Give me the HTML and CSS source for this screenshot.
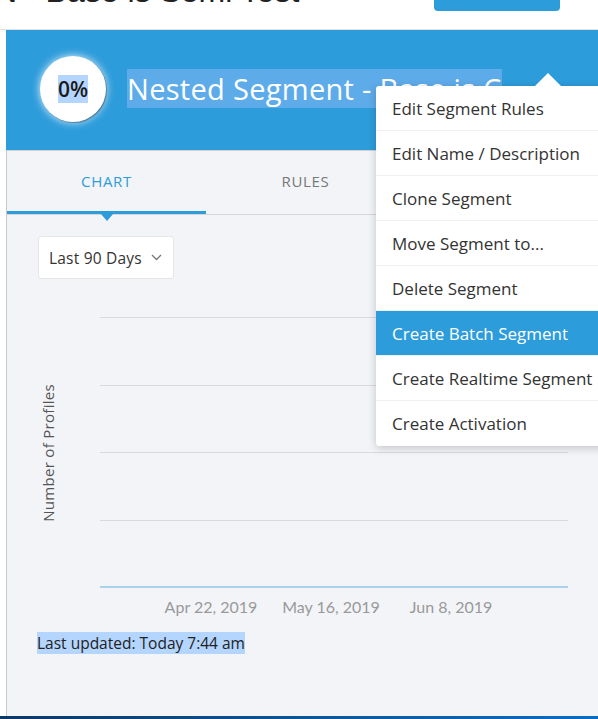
FILE: index.html
```html
<!DOCTYPE html>
<html lang="en">
<head>
<meta charset="utf-8">
<title>Segment</title>
<link rel="stylesheet" href="styles.css">
</head>
<body>
<div class="page">
  <div class="topbar">
    <h1 class="page-title">N - Base is Semi Test</h1>
    <span class="top-btn"></span>
  </div>
  <div class="panel">
    <div class="hero">
      <div class="progress"><span class="sel-light">0%</span></div>
      <h2 class="seg-title"><span class="sel-dark">Nested Segment - Base is C</span></h2>
    </div>
    <div class="tabs">
      <div class="tab active">CHART</div>
      <div class="tab">RULES</div>
      <div class="tab">ACTIVATIONS</div>
    </div>
    <div class="content">
      <div class="range">
        <span>Last 90 Days</span>
        <svg class="chev" width="11" height="7" viewBox="0 0 11 7"><path d="M1 1l4.5 4.5L10 1" fill="none" stroke="#777" stroke-width="1.3"/></svg>
      </div>
      <div class="chart">
        <div class="ylabel">Number of Profiles</div>
        <div class="plot">
          <div class="gridrow r1"></div>
          <div class="gridrow r2"></div>
          <div class="gridrow r3"></div>
          <div class="gridrow r4"></div>
        </div>
        <div class="xlabels">
          <span>Apr 22, 2019</span>
          <span>May 16, 2019</span>
          <span>Jun 8, 2019</span>
        </div>
      </div>
      <div class="updated"><span class="sel-light">Last updated: Today 7:44 am</span></div>
    </div>
  </div>
  <div class="taskbar"></div>
  <ul class="menu">
    <li>Edit Segment Rules</li>
    <li>Edit Name / Description</li>
    <li>Clone Segment</li>
    <li>Move Segment to...</li>
    <li>Delete Segment</li>
    <li class="hl">Create Batch Segment</li>
    <li>Create Realtime Segment</li>
    <li>Create Activation</li>
  </ul>
</div>
</body>
</html>
```
FILE: styles.css
```css
* { box-sizing: border-box; }
html, body { margin: 0; padding: 0; }
body {
  overflow: hidden;
  background: #fff;
  font-family: "Open Sans", "Noto Sans", sans-serif;
  color: #333;
}
.page {
  position: relative;
  width: 598px;
  height: 719px;
  display: flex;
  flex-direction: column;
}
.topbar {
  height: 30px;
  flex-shrink: 0;
  border-bottom: 1px solid #e2e2e2;
  display: flex;
  justify-content: space-between;
  align-items: flex-start;
  overflow: hidden;
}
.page-title {
  margin: -27px 0 0 -6px;
  font-family: "Liberation Sans", Arial, sans-serif;
  font-weight: 400;
  font-size: 32px;
  line-height: 36px;
  color: #222;
  white-space: nowrap;
}
.top-btn {
  display: block;
  width: 126px;
  height: 31px;
  margin: -20px 38px 0 0;
  background: #2d9cdb;
  border-radius: 4px;
}
.panel {
  flex: 1;
  margin-left: 6px;
  border-left: 1px solid #c9c9c9;
  background: #f3f4f8;
  display: flex;
  flex-direction: column;
  min-width: 0;
}
.hero {
  height: 120px;
  margin-left: -1px;
  background: #2d9cdb;
  display: flex;
  align-items: center;
  padding-left: 34px;
  gap: 21px;
}
.progress {
  width: 66px;
  height: 66px;
  border-radius: 50%;
  background: #fff;
  flex-shrink: 0;
  display: flex;
  align-items: center;
  justify-content: center;
  box-shadow: 1px 1px 1px rgba(0,0,0,0.35), 0 0 9px rgba(255,255,255,0.9);
  font-size: 21px;
  font-weight: 600;
  color: #1a1a1a;
  margin-top: -2px;
}
.sel-light { background: #b4d5fe; }
.sel-dark { background: #5eabea; }
.seg-title {
  margin: -2px 0 0 0;
  font-weight: 400;
  font-size: 29px;
  letter-spacing: 0.3px;
  line-height: 40px;
  color: #fff;
  white-space: nowrap;
  overflow: hidden;
  max-width: 376px;
}
.tabs {
  display: flex;
  height: 65px;
  border-top: 1px solid #cfcfcf;
  border-bottom: 1px solid #d6d6d6;
}
.tab {
  position: relative;
  width: 199px;
  flex-shrink: 0;
  display: flex;
  align-items: center;
  justify-content: center;
  font-size: 15px;
  letter-spacing: 0.7px;
  color: #777;
  padding-bottom: 3px;
}
.tab.active {
  color: #2d9cdb;
  border-bottom: 3px solid #2d9cdb;
  padding-bottom: 0;
}
.tab.active::after {
  content: "";
  position: absolute;
  left: 50%;
  bottom: -10px;
  margin-left: -6px;
  border-left: 6px solid transparent;
  border-right: 6px solid transparent;
  border-top: 7px solid #2d9cdb;
}
.content {
  padding: 21px 0 0 30px;
}
.range {
  margin-left: 1px;
  width: 136px;
  height: 43px;
  background: #fff;
  border: 1px solid #e6e6e6;
  border-radius: 3px;
  display: flex;
  align-items: center;
  justify-content: space-between;
  padding: 0 11px 0 10px;
  font-size: 15.5px;
  letter-spacing: 0.2px;
  color: #333;
}
.chev { display: block; }
.chart {
  display: grid;
  grid-template-columns: 63px 468px;
  margin-top: 38px;
}
.ylabel {
  grid-row: 1;
  grid-column: 1;
  writing-mode: vertical-rl;
  transform: rotate(180deg);
  align-self: center;
  justify-self: start;
  margin-left: 1px;
  font-size: 15px;
  letter-spacing: 0.3px;
  color: #555;
}
.plot {
  grid-row: 1;
  grid-column: 2;
  display: flex;
  flex-direction: column;
  border-bottom: 2px solid #a9d3ec;
}
.gridrow { border-top: 1px solid #dadada; }
.r1 { height: 68px; }
.r2 { height: 67px; }
.r3 { height: 68px; }
.r4 { height: 66px; }
.xlabels {
  grid-row: 2;
  grid-column: 2;
  display: grid;
  grid-template-columns: repeat(3, 120px);
  padding-left: 51px;
  margin-top: 9px;
  font-family: "Lato", sans-serif;
  font-size: 16px;
  color: #999;
  text-align: center;
  line-height: 20px;
}
.updated {
  margin-top: 15px;
  font-size: 15.5px;
  color: #222;
  line-height: 22px;
}
.taskbar {
  height: 3px;
  flex-shrink: 0;
  background: linear-gradient(to right, #0b3866, #0d5a9e 60%, #0b6cc2);
}
.menu {
  position: absolute;
  left: 376px;
  top: 86px;
  width: 240px;
  margin: 0;
  padding: 0;
  list-style: none;
  background: #fff;
  border-radius: 3px;
  box-shadow: 0 2px 8px rgba(0,0,0,0.2);
}
.menu::before {
  content: "";
  position: absolute;
  left: 159px;
  top: -13px;
  border-left: 13px solid transparent;
  border-right: 13px solid transparent;
  border-bottom: 13px solid #fff;
}
.menu li {
  height: 45px;
  display: flex;
  align-items: center;
  padding-left: 16px;
  font-size: 17px;
  color: #333;
  border-bottom: 1px solid #f0f0f0;
}
.menu li:last-child { border-bottom: none; }
.menu li.hl {
  background: #2d9cdb;
  color: #fff;
}
```
